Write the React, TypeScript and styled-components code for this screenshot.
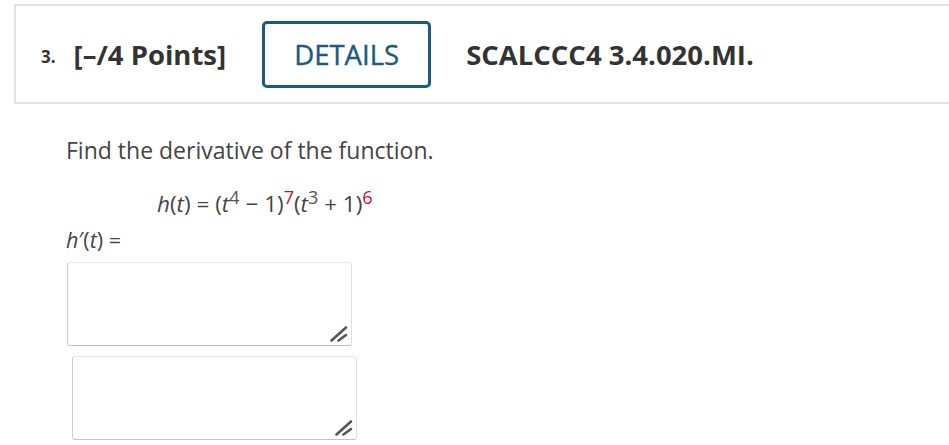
import { FC } from 'react'
import styled, { createGlobalStyle } from 'styled-components'

const GlobalStyle = createGlobalStyle`
  html, body {
    margin: 0;
    padding: 0;
    background: #ffffff;
    overflow: hidden;
  }
  body {
    font-family: 'Open Sans', 'Noto Sans', sans-serif;
    color: #333333;
  }
`

const Page = styled.div`
  width: 949px;
  height: 445px;
  overflow: hidden;
  padding-top: 4px;
  box-sizing: border-box;
`

const Header = styled.header`
  display: flex;
  align-items: center;
  height: 100px;
  box-sizing: border-box;
  margin-left: 14px;
  width: 960px;
  border: 2px solid #e2e2e2;
  padding-left: 25px;
`

const Number = styled.span`
  font-size: 17px;
  font-weight: 700;
  color: #333;
  margin-right: 18px;
  margin-top: 4px;
`

const Points = styled.span`
  font-size: 27.5px;
  font-weight: 700;
  color: #333;
  margin-right: 36px;
`

const DetailsButton = styled.button`
  display: flex;
  align-items: center;
  justify-content: center;
  width: 169px;
  height: 67px;
  box-sizing: border-box;
  border: 3px solid #1c5a80;
  border-radius: 5px;
  background: #ffffff;
  color: #1c5a80;
  font-family: 'Open Sans', sans-serif;
  font-size: 27.5px;
  font-weight: 400;
  -webkit-text-stroke: 0.4px #1c5a80;
  margin-right: 35px;
  padding: 0;
`

const QuestionId = styled.span`
  font-size: 27.5px;
  font-weight: 700;
  color: #333;
`

const Body = styled.section`
  padding: 32px 0 0 66px;
  color: #444;
`

const Prompt = styled.p`
  margin: 0;
  font-size: 23px;
  line-height: 28px;
`

const Equation = styled.div`
  margin: 28px 0 0 91px;
  font-size: 22.5px;
  line-height: 24px;
`

const Var = styled.i`
  font-style: italic;
`

const Sup = styled.sup<{ $red?: boolean }>`
  font-size: 18px;
  line-height: 0;
  vertical-align: 8px;
  color: ${(p) => (p.$red ? '#c8102e' : '#555')};
`

const AnswerLabel = styled.div`
  margin-top: 12px;
  font-size: 21.5px;
  line-height: 24px;
`

const AnswerWrap = styled.div<{ $offset: number }>`
  position: relative;
  width: 285px;
  height: 84px;
  margin-left: ${(p) => p.$offset}px;
  margin-top: 10px;
`

const AnswerBox = styled.textarea`
  display: block;
  width: 100%;
  height: 100%;
  box-sizing: border-box;
  border: 1px solid #d0d0d0;
  border-top-color: #e6e6e6;
  border-right-color: #e0e0e0;
  border-bottom-color: #c4c4c4;
  border-radius: 3px;
  background: #ffffff;
  resize: none;
  outline: none;
  font-family: 'Open Sans', sans-serif;
`

const Grip = styled.svg`
  position: absolute;
  right: 4px;
  bottom: 4px;
  width: 18px;
  height: 16px;
  pointer-events: none;
`

const ResizeGrip: FC = () => (
  <Grip viewBox="0 0 18 16">
    <line x1="1.5" y1="14.5" x2="16" y2="1.5" stroke="#555" strokeWidth="2.6" strokeLinecap="round" />
    <line x1="8.5" y1="14.5" x2="16" y2="9" stroke="#555" strokeWidth="2.6" strokeLinecap="round" />
  </Grip>
)

const App: FC = () => (
  <>
    <GlobalStyle />
    <Page>
      <Header>
        <Number>3.</Number>
        <Points>[–/4 Points]</Points>
        <DetailsButton>DETAILS</DetailsButton>
        <QuestionId>SCALCCC4 3.4.020.MI.</QuestionId>
      </Header>
      <Body>
        <Prompt>Find the derivative of the function.</Prompt>
        <Equation>
          <Var>h</Var>(<Var>t</Var>) = (<Var>t</Var>
          <Sup>4</Sup> − 1)<Sup $red>7</Sup>(<Var>t</Var>
          <Sup>3</Sup> + 1)<Sup $red>6</Sup>
        </Equation>
        <AnswerLabel>
          <Var>h</Var>′(<Var>t</Var>) =
        </AnswerLabel>
        <AnswerWrap $offset={1}>
          <AnswerBox />
          <ResizeGrip />
        </AnswerWrap>
        <AnswerWrap $offset={6}>
          <AnswerBox />
          <ResizeGrip />
        </AnswerWrap>
      </Body>
    </Page>
  </>
)

export default App
